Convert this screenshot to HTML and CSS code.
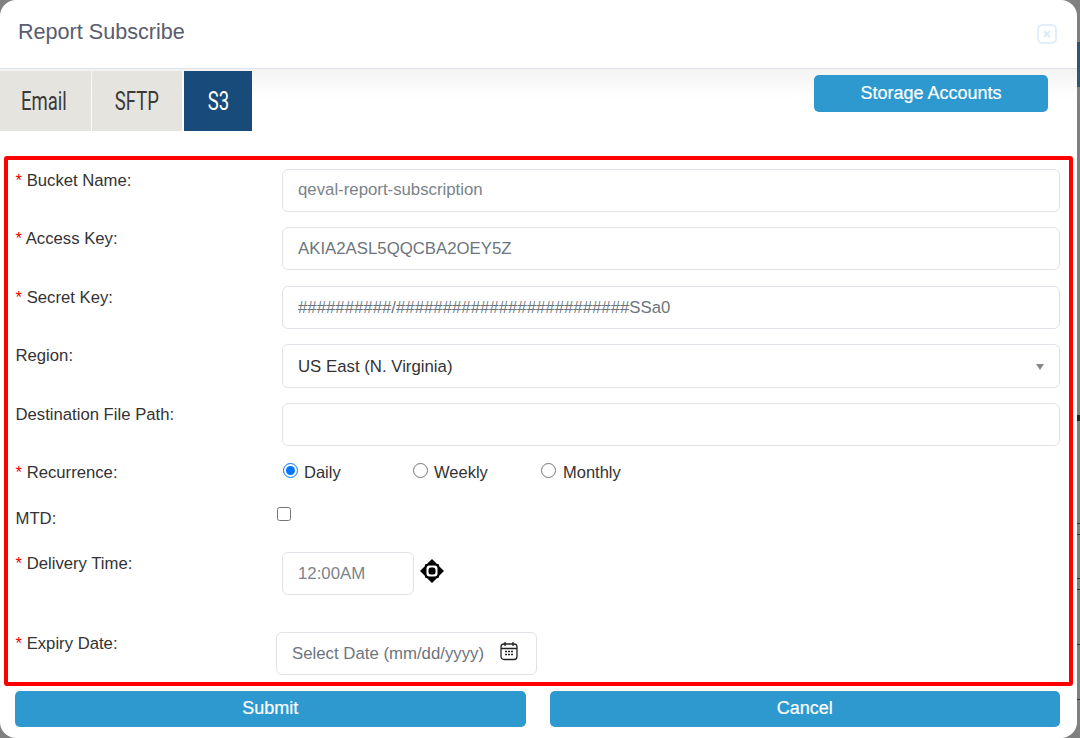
FILE: index.html
```html
<!DOCTYPE html>
<html lang="en">
<head>
<meta charset="utf-8">
<title>Report Subscribe</title>
<link rel="stylesheet" href="styles.css">
</head>
<body>
<div class="backdrop">
  <i class="mark mark-band"></i>
  <i class="mark mark-text"></i>
  <i class="mark mark-l1"></i>
  <i class="mark mark-l2"></i>
  <i class="mark mark-l3"></i>
  <i class="mark mark-l4"></i>
  <i class="mark mark-l5"></i>
  <i class="mark mark-l6"></i>
</div>
<div class="modal">
  <header class="modal-header">
    <h1 class="modal-title">Report Subscribe</h1>
    <span class="close-btn" aria-label="Close">
      <svg width="20" height="20" viewBox="0 0 20 20"><rect x="1" y="1" width="18" height="18" rx="4.5" fill="none" stroke="#e3eefb" stroke-width="2"/><path d="M7 7l6 6M13 7l-6 6" stroke="#dce9f8" stroke-width="2" fill="none"/></svg>
    </span>
  </header>
  <div class="toolbar">
    <nav class="tabs">
      <span class="tab tab-email"><span class="tab-text">Email</span></span>
      <span class="tab tab-sftp"><span class="tab-text">SFTP</span></span>
      <span class="tab tab-s3"><span class="tab-text">S3</span></span>
    </nav>
    <button class="btn btn-storage" type="button">Storage Accounts</button>
  </div>
  <form class="form-box">
    <div class="row row-a">
      <label class="label"><span class="req">*</span> Bucket Name:</label>
      <input class="control" placeholder="qeval-report-subscription">
    </div>
    <div class="row row-b">
      <label class="label"><span class="req">*</span> Access Key:</label>
      <input class="control" value="AKIA2ASL5QQCBA2OEY5Z">
    </div>
    <div class="row row-c">
      <label class="label"><span class="req">*</span> Secret Key:</label>
      <input class="control" value="##########/#########################SSa0">
    </div>
    <div class="row row-d">
      <label class="label">Region:</label>
      <div class="control select">US East (N. Virginia)<span class="caret"></span></div>
    </div>
    <div class="row row-e">
      <label class="label">Destination File Path:</label>
      <input class="control">
    </div>
    <div class="row row-f">
      <label class="label"><span class="req">*</span> Recurrence:</label>
      <div class="radios">
        <label class="radio r-daily"><input type="radio" name="rec" checked> Daily</label>
        <label class="radio r-weekly"><input type="radio" name="rec"> Weekly</label>
        <label class="radio r-monthly"><input type="radio" name="rec"> Monthly</label>
      </div>
    </div>
    <div class="row row-g">
      <label class="label">MTD:</label>
      <input class="check" type="checkbox">
    </div>
    <div class="row row-h">
      <label class="label"><span class="req">*</span> Delivery Time:</label>
      <input class="control time" placeholder="12:00AM">
      <svg class="time-icon" width="24" height="24" viewBox="0 0 24 24"><path d="M12 0l4.8 4.8 2 .4.4 2L24 12l-4.8 4.8-.4 2-2 .4L12 24l-4.8-4.8-2-.4-.4-2L0 12l4.8-4.8.4-2 2-.4z" fill="#000"/><rect x="6.5" y="6.5" width="11" height="11" rx="3" fill="#fff"/><rect x="8.5" y="8.5" width="7" height="7" rx="2.5" fill="#000"/></svg>
    </div>
    <div class="row row-i">
      <label class="label"><span class="req">*</span> Expiry Date:</label>
      <div class="date-field">
        <span class="date-text">Select Date (mm/dd/yyyy)</span>
        <svg class="cal" width="18" height="20" viewBox="0 0 18 20"><rect x="1" y="3" width="16" height="15.5" rx="3" fill="none" stroke="#222" stroke-width="1.3"/><path d="M1 7.5h16M5 1v4M13 1v4" stroke="#222" stroke-width="1.3" fill="none"/><path d="M5 10.5h2M8 10.5h2M11 10.5h2M5 13.5h2M8 13.5h2M11 13.5h2" stroke="#222" stroke-width="1.4" fill="none"/></svg>
      </div>
    </div>
  </form>
  <footer class="actions">
    <button class="btn btn-wide" type="button">Submit</button>
    <button class="btn btn-wide" type="button">Cancel</button>
  </footer>
</div>
</body>
</html>
```
FILE: styles.css
```css
* { box-sizing: border-box; }
html, body { margin: 0; height: 738px; overflow: hidden; }
body {
  background: #808080;
  font-family: "Liberation Sans", Arial, sans-serif;
  color: #333;
  position: relative;
}
.backdrop { position: absolute; top: 0; right: 0; width: 3px; height: 738px; }
.mark { position: absolute; left: 0; width: 3px; height: 1px; background: #333; }
.mark-band { top: 42px; height: 45px; background: #28597a; }
.mark-text { top: 415px; height: 6px; background: #222; }
.mark-l1 { top: 523px; }
.mark-l2 { top: 534px; }
.mark-l3 { top: 578px; }
.mark-l4 { top: 589px; }
.mark-l5 { top: 644px; }
.mark-l6 { top: 699px; }
.modal {
  position: relative;
  width: 1077px;
  height: 738px;
  background: #fff;
  border-radius: 16px;
  overflow: hidden;
}
.modal-header {
  height: 69px;
  border-bottom: 1px solid #dee2eb;
  display: flex;
  align-items: center;
  justify-content: space-between;
  padding: 0 20px 5px 18px;
}
.modal-title {
  margin: 0;
  font-size: 21.6px;
  font-weight: 400;
  color: #595d6e;
}
.close-btn { display: flex; margin-top: 5px; }
.toolbar {
  height: 87px;
  padding-top: 2px;
  display: flex;
  justify-content: space-between;
  align-items: flex-start;
  padding-right: 29px;
  background: linear-gradient(#f3f3f3 0, #fff 30px);
}
.tabs { display: flex; height: 60px; }
.tab {
  display: flex;
  align-items: center;
  justify-content: center;
  font-family: Roboto, "Liberation Sans", sans-serif;
  font-size: 25px;
  background: #e5e4df;
  color: #3a3a3a;
}
.tab-text { display: inline-block; transform: scaleX(0.74); }
.tab-email { width: 91px; margin-right: 1px; padding-right: 4px; }
.tab-sftp { width: 90px; margin-right: 2px; }
.tab-s3 { width: 68px; background: #184a7a; color: #fff; }
.btn {
  border: 0;
  border-radius: 5px;
  background: #2d99cf;
  color: #fff;
  font-family: "Liberation Sans", Arial, sans-serif;
  font-size: 18px;
  font-weight: 400;
  -webkit-text-stroke: 0.2px #fff;
  padding: 0 0 2px;
}
.btn-storage { width: 234px; height: 37px; margin-top: 4px; padding: 0; }
.form-box {
  margin-left: 4px;
  width: 1069px;
  height: 530px;
  border: 4px solid #f00;
  border-radius: 3px;
  padding: 9px 9px 0 7.5px;
  display: flex;
  flex-direction: column;
}
.row { display: flex; align-items: flex-start; flex: none; }
.row-a, .row-b, .row-c, .row-e { height: 43px; }
.row-d { height: 44px; }
.row-b, .row-d, .row-e { margin-top: 15px; }
.row-c { margin-top: 16px; }
.row-f { margin-top: 14px; height: 25px; }
.row-g { margin-top: 23px; height: 22px; }
.row-h { margin-top: 22px; height: 43px; }
.row-i { margin-top: 37px; height: 43px; }
.label {
  width: 266.5px;
  flex: none;
  font-size: 16.7px;
  line-height: 22px;
  padding-top: 1px;
  color: #333;
}
.row-f .label { padding-top: 2px; }
.row-g .label { padding-top: 0; }
.req { color: #e00; }
.control {
  flex: 1;
  min-width: 0;
  height: 100%;
  border: 1px solid #dfe3e8;
  border-radius: 6px;
  padding: 0 15px;
  font-family: "Liberation Sans", Arial, sans-serif;
  font-size: 16.8px;
  color: #6c757d;
  background: #fff;
  outline: 0;
}
.row-a .control { padding-bottom: 2px; }
.control::placeholder { color: #7b838a; opacity: 1; }
.select {
  display: flex;
  align-items: center;
  justify-content: space-between;
  color: #333;
  padding-top: 2px;
}
.caret {
  width: 0;
  height: 0;
  border-left: 4px solid transparent;
  border-right: 4px solid transparent;
  border-top: 6px solid #888;
}
.radios { display: flex; font-size: 16.5px; color: #333; }
.radio { display: flex; align-items: center; line-height: 24px; }
.radio input { margin: 0 6px 4px 0; width: 15px; height: 15px; accent-color: #0075ff; }
.r-daily { width: 130px; margin-left: 1px; }
.r-weekly { width: 129px; }
.r-monthly input { margin-left: -1px; margin-right: 7px; }
.check { margin: -1px 0 0 -5px; width: 14px; height: 14px; }
.time { flex: none; width: 132px; }
.time-icon { margin: 7px 0 0 6px; }
.date-field {
  margin-left: -6px;
  width: 261px;
  height: 43px;
  border: 1px solid #dfe3e8;
  border-radius: 6px;
  display: flex;
  align-items: center;
  padding: 0 18px 0 15px;
  justify-content: space-between;
  font-size: 16.8px;
  color: #6c757d;
}
.cal { margin-bottom: 6px; flex: none; }
.actions {
  display: flex;
  gap: 24px;
  padding: 5px 17px 0 15px;
}
.btn-wide { flex: 1; height: 36px; }
```
